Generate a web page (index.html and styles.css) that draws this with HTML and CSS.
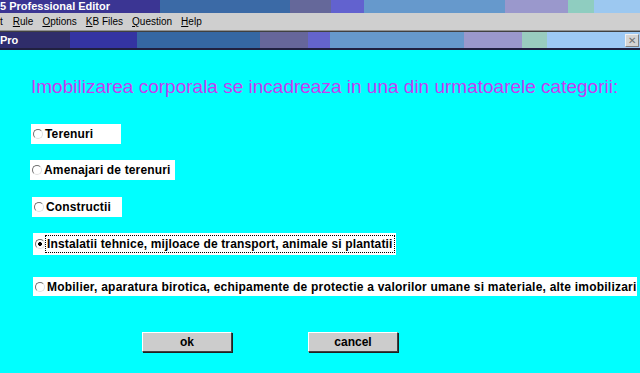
FILE: index.html
```html
<!DOCTYPE html>
<html lang="ro">
<head>
  <meta charset="UTF-8" />
  <title>Professional Editor</title>
  <link rel="stylesheet" href="styles.css">
</head>
<body>

  <div class="titlebar">
    <span class="seg s1"><b>5 Professional Editor</b></span>
    <span class="seg s2"></span>
    <span class="seg s3"></span>
    <span class="seg s4"></span>
    <span class="seg s5"></span>
    <span class="seg s6"></span>
    <span class="seg s7"></span>
    <span class="seg s8"></span>
  </div>

  <div class="menubar">
    <span>t</span>
    <span><u>R</u>ule</span>
    <span><u>O</u>ptions</span>
    <span><u>K</u>B Files</span>
    <span><u>Q</u>uestion</span>
    <span><u>H</u>elp</span>
  </div>

  <div class="childbar">
    <span class="seg c1"><b>Pro</b></span>
    <span class="seg c2"></span>
    <span class="seg c3"></span>
    <span class="seg c4"></span>
    <span class="seg c5"></span>
    <span class="seg c6"></span>
    <span class="seg c7"></span>
    <span class="seg c8"></span>
    <span class="seg c9"></span>
    <span class="seg c10"><span class="close-btn">✕</span></span>
  </div>

  <div class="form">
    <h1 class="question">Imobilizarea corporala se incadreaza in una din urmatoarele categorii:</h1>

    <label class="option o1"><input type="radio" name="cat"> Terenuri</label>
    <label class="option o2"><input type="radio" name="cat"> Amenajari de terenuri</label>
    <label class="option o3"><input type="radio" name="cat"> Constructii</label>
    <label class="option o4"><input type="radio" name="cat" checked> <span class="focus">Instalatii tehnice, mijloace de transport, animale si plantatii</span></label>
    <label class="option o5"><input type="radio" name="cat"> Mobilier, aparatura birotica, echipamente de protectie a valorilor umane si materiale, alte imobilizari</label>

    <div class="buttons">
      <button class="btn">ok</button>
      <button class="btn">cancel</button>
    </div>
  </div>

</body>
</html>
```

FILE: styles.css
```css
body {
  margin: 0;
  width: 640px;
  height: 373px;
  overflow: hidden;
  background-color: #00ffff;
  font-family: "Liberation Sans", Arial, sans-serif;
}

.titlebar, .childbar {
  display: flex;
  color: white;
  font-size: 11px;
  overflow: hidden;
}

.titlebar {
  height: 13px;
  line-height: 12px;
}

.childbar {
  height: 16px;
  line-height: 16px;
  border-top: 1px solid #404040;
  border-bottom: 2px solid #202040;
}

.seg {
  flex: none;
  height: 100%;
  white-space: nowrap;
}

.s1 { width: 160px; background: #3b3593; }
.s2 { width: 130px; background: #3b6aa6; }
.s3 { width: 41px;  background: #65689a; }
.s4 { width: 33px;  background: #6262cf; }
.s5 { width: 141px; background: #6699cc; }
.s6 { width: 63px;  background: #9a98cc; }
.s7 { width: 26px;  background: #8fcdc0; }
.s8 { flex: 1;      background: #9cc8f0; }

.c1 { width: 20px;  background: #2e2c70; }
.c2 { width: 50px;  background: #2f2d6a; }
.c3 { width: 67px;  background: #3434a2; }
.c4 { width: 123px; background: #3567a3; }
.c5 { width: 48px;  background: #66669a; }
.c6 { width: 22px;  background: #6464cc; }
.c7 { width: 134px; background: #6699cc; }
.c8 { width: 58px;  background: #9a98cc; }
.c9 { width: 25px;  background: #99ccbf; }

.c10 {
  flex: 1;
  display: flex;
  justify-content: flex-end;
  align-items: center;
  background: #9dc9f4;
}

.close-btn {
  width: 14px;
  height: 13px;
  margin-right: 1px;
  background: #d4d4d4;
  border: 1px solid;
  border-color: #f0f0f0 #808080 #808080 #f0f0f0;
  box-sizing: border-box;
  color: #707070;
  font-size: 10px;
  line-height: 11px;
  text-align: center;
}

.menubar {
  display: flex;
  gap: 9px;
  height: 17px;
  line-height: 17px;
  background: #cfcfcf;
  border-bottom: 1px solid #909090;
  font-size: 10px;
  color: #000;
}

.menubar span:first-child {
  margin-right: 1px;
}

.form {
  display: flex;
  flex-direction: column;
  align-items: flex-start;
  padding-left: 30px;
}

.question {
  margin: 26px 0 0 1px;
  font-size: 19px;
  font-weight: normal;
  color: #c63cf2;
  white-space: nowrap;
}

.option {
  display: flex;
  align-items: center;
  gap: 2px;
  background: white;
  font-size: 12px;
  font-weight: bold;
  letter-spacing: 0.15px;
  color: #000;
  white-space: nowrap;
  height: 20px;
}

.option input {
  appearance: none;
  margin: 0 0 0 2px;
  width: 10px;
  height: 10px;
  border: 1px solid;
  border-color: #707070 #e0e0e0 #e0e0e0 #707070;
  border-radius: 50%;
  background: white;
  box-sizing: border-box;
}

.option input:checked {
  background: radial-gradient(circle, #000 0 1.6px, #fff 2.2px);
}

.o1 { margin: 26px 0 0 1px; width: 90px; }
.o2 { margin-top: 16px; width: 145px; }
.o3 { margin: 17px 0 0 2px; width: 90px; }
.o4 { margin: 16px 0 0 3px; width: 363px; height: 22px; }
.o5 { margin: 22px 0 0 3px; height: 19px; letter-spacing: 0.22px; }

.focus {
  outline: 1px dotted #000;
  outline-offset: 1px;
}

.buttons {
  display: flex;
  gap: 76px;
  margin: 36px 0 0 112px;
}

.btn {
  width: 90px;
  height: 20px;
  background: #cccccc;
  border: 1px solid;
  border-color: #ffffff #404040 #404040 #ffffff;
  box-shadow: 1px 1px 0 #202020;
  font-family: "Liberation Sans", Arial, sans-serif;
  font-size: 12px;
  font-weight: bold;
  color: #000;
  padding: 0;
}
```
